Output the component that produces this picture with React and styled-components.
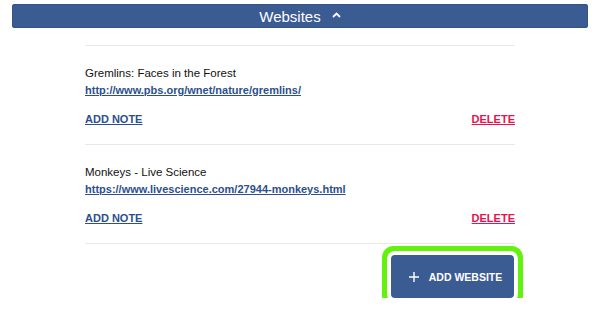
import React from "react";
import styled, { createGlobalStyle } from "styled-components";

const GlobalStyle = createGlobalStyle`
  html, body {
    margin: 0;
    padding: 0;
    background: #ffffff;
    font-family: "Liberation Sans", Arial, Helvetica, sans-serif;
  }
`;

const Page = styled.div`
  padding: 4px 12px 0;
`;

const HeaderBar = styled.div`
  height: 24px;
  background-color: #3b5b93;
  border-radius: 3px;
  box-shadow: 0 0 0 1px #34548a inset;
  display: flex;
  align-items: center;
  justify-content: center;
  gap: 11px;
  color: #ffffff;
  font-size: 15px;
`;

const Caret = styled.svg`
  width: 9px;
  height: 6px;
  margin-top: -2px;
`;

const List = styled.div`
  width: 430px;
  margin: 17px auto 0;
  border-top: 1px solid #e8e8e8;
`;

const Item = styled.div`
  padding: 19px 0 16px;
  border-bottom: 1px solid #e8e8e8;
  font-size: 11px;
  line-height: 17px;
`;

const Title = styled.div`
  color: #111111;
  font-size: 11.5px;
`;

const Link = styled.a`
  display: block;
  color: #2c4f8e;
  font-weight: bold;
  text-decoration: underline;
`;

const Actions = styled.div`
  display: flex;
  justify-content: space-between;
  margin-top: 12px;
`;

const Action = styled.a`
  font-weight: bold;
  text-decoration: underline;
  color: ${(p) => (p.$danger ? "#e8134e" : "#2c4f8e")};
  cursor: pointer;
`;

const Footer = styled.div`
  width: 430px;
  margin: 11px auto 0;
  padding-right: 1px;
  box-sizing: border-box;
  display: flex;
  justify-content: flex-end;
`;

const AddButton = styled.button`
  width: 123px;
  height: 43px;
  padding: 0 0 0 6px;
  border: none;
  border-radius: 4px;
  background-color: #3b5b93;
  color: #ffffff;
  font-family: inherit;
  font-size: 10.5px;
  font-weight: bold;
  display: flex;
  align-items: center;
  justify-content: center;
  gap: 10px;
  box-shadow: 0 0 0 4px #ffffff, 0 0 0 9px #62f20c;
`;

const Plus = styled.svg`
  width: 10px;
  height: 10px;
`;

const sites = [
  {
    title: "Gremlins: Faces in the Forest",
    url: "http://www.pbs.org/wnet/nature/gremlins/",
  },
  {
    title: "Monkeys - Live Science",
    url: "https://www.livescience.com/27944-monkeys.html",
  },
];

export default function App() {
  return (
    <>
      <GlobalStyle />
      <Page>
        <HeaderBar>
          <span>Websites</span>
          <Caret viewBox="0 0 9 6">
            <path d="M1 5 L4.5 1.5 L8 5" fill="none" stroke="#fff" strokeWidth="1.8" />
          </Caret>
        </HeaderBar>
        <List>
          {sites.map((s) => (
            <Item key={s.url}>
              <Title>{s.title}</Title>
              <Link href="#">{s.url}</Link>
              <Actions>
                <Action>ADD NOTE</Action>
                <Action $danger>DELETE</Action>
              </Actions>
            </Item>
          ))}
        </List>
        <Footer>
          <AddButton>
            <Plus viewBox="0 0 10 10">
              <path d="M5 0 V10 M0 5 H10" stroke="#fff" strokeWidth="1.4" />
            </Plus>
            ADD WEBSITE
          </AddButton>
        </Footer>
      </Page>
    </>
  );
}
